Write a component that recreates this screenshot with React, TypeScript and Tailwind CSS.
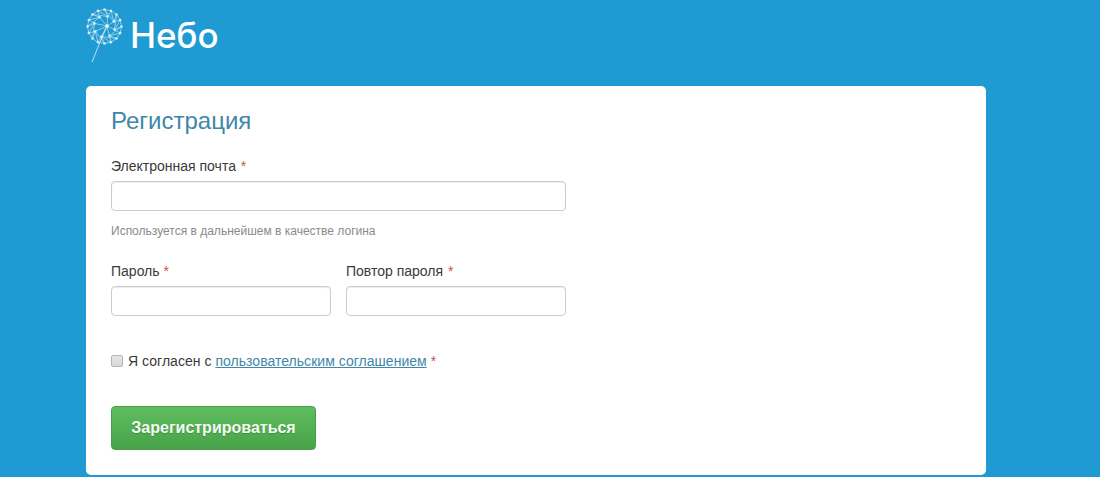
const Req = ({ tight = false }: { tight?: boolean }) => (
  <span className={tight ? "text-[#c9524e]" : "ml-[1px] text-[#c9524e]"}> *</span>
)

const inputClass =
  "mt-[5px] block h-[30px] w-full rounded-[4px] border border-[#cccccc] bg-white shadow-[inset_0_1px_1px_rgba(0,0,0,0.075)]"

function Logo() {
  // dandelion head: outer ring points, spokes from the centre, thin stem
  const outer = Array.from({ length: 16 }, (_, i) => {
    const a = (i / 16) * Math.PI * 2
    return [18.5 + 17 * Math.cos(a), 18.5 + 17 * Math.sin(a)]
  })
  const mid = Array.from({ length: 8 }, (_, i) => {
    const a = (i / 8) * Math.PI * 2 + 0.3
    return [18.5 + 10.5 * Math.cos(a), 18.5 + 10.5 * Math.sin(a)]
  })
  return (
    <svg width="40" height="54" viewBox="0 0 40 54" fill="none" className="shrink-0">
      <g stroke="#ffffff" strokeWidth="1" opacity="0.5">
        {outer.map((p, i) => {
          const n = outer[(i + 1) % outer.length]
          const m = mid[Math.floor(i / 2)]
          const m2 = mid[(Math.floor(i / 2) + 1) % 8]
          return (
            <g key={i}>
              <line x1={p[0]} y1={p[1]} x2={n[0]} y2={n[1]} />
              <line x1={p[0]} y1={p[1]} x2={m[0]} y2={m[1]} />
              <line x1={p[0]} y1={p[1]} x2={m2[0]} y2={m2[1]} />
            </g>
          )
        })}
        {mid.map((p, i) => (
          <line key={i} x1="21" y1="18" x2={p[0]} y2={p[1]} />
        ))}
      </g>
      {outer.concat(mid).map((p, i) => (
        <circle key={i} cx={p[0]} cy={p[1]} r="1.3" fill="#ffffff" opacity="0.75" />
      ))}
      <circle cx="21" cy="18" r="1.7" fill="#ffffff" />
      <path d="M21 18 Q13 36 6 54" stroke="#ffffff" strokeWidth="1" opacity="0.7" />
    </svg>
  )
}

export default function App() {
  return (
    <div className="h-[477px] overflow-hidden bg-[#1f9ad2] font-['Liberation_Sans',Arial,sans-serif]">
      <div className="ml-[86px] w-[900px]">
        <header className="flex h-[86px] items-start pt-[8px]">
          <Logo />
          <span className="ml-[4px] mt-[3px] font-['Inter',sans-serif] text-[35px] font-medium leading-[48px] text-white">Небо</span>
        </header>

        <main className="h-[389px] rounded-[5px] bg-white px-[25px] pt-[20px]">
          <h1 className="text-[24px] leading-[30px] text-[#3f87a8]">Регистрация</h1>

          <div className="mt-[20px] w-[455px]">
            <label className="block text-[14px] leading-[20px] text-[#3a3a3a]">
              Электронная почта<Req />
            </label>
            <input type="text" className={inputClass} />
            <p className="mt-[12px] text-[12px] leading-[16px] text-[#8a8a8a]">Используется в дальнейшем в качестве логина</p>

            <div className="mt-[22px] flex gap-[15px]">
              <div className="w-[220px]">
                <label className="block text-[14px] leading-[20px] text-[#3a3a3a]">Пароль<Req tight /></label>
                <input type="password" className={inputClass} />
              </div>
              <div className="w-[220px]">
                <label className="block text-[14px] leading-[20px] text-[#3a3a3a]">Повтор пароля<Req /></label>
                <input type="password" className={inputClass} />
              </div>
            </div>
          </div>

          <label className="mt-[35px] flex items-center text-[14px] leading-[20px] tracking-[0.03px] text-[#3a3a3a]">
            <input type="checkbox" className="m-0 h-[12px] w-[12px] appearance-none rounded-[2px] border border-[#b5b5b5] bg-gradient-to-b from-[#e6e6e6] to-[#d8d8d8]" />
            <span className="ml-[5px]">
              Я согласен с <a href="#" className="text-[#3f87a8] underline">пользовательским соглашением</a><Req tight />
            </span>
          </label>

          <button className="mt-[35px] block h-[44px] w-[205px] rounded-[4px] border border-[#4a9c4a] bg-gradient-to-b from-[#5fbd5f] to-[#48a348] text-[16px] font-bold text-[#f4fbf2] [text-shadow:0_1px_1px_rgba(0,0,0,0.2)]">
            Зарегистрироваться
          </button>
        </main>
      </div>
    </div>
  )
}
